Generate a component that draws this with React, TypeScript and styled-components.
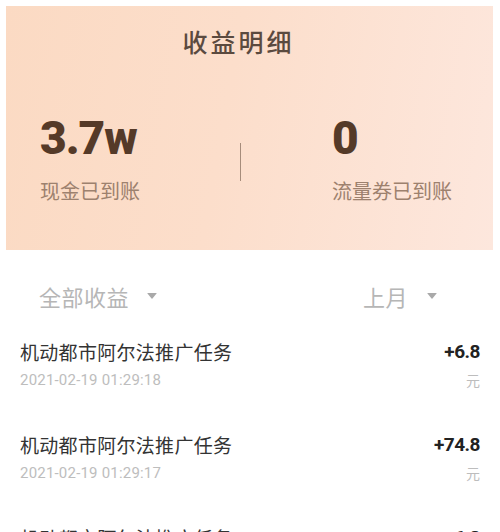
import styled, { createGlobalStyle } from 'styled-components'

const GlobalStyle = createGlobalStyle`
  body {
    margin: 0;
    background: #ffffff;
    font-family: 'Noto Sans CJK SC', 'Noto Sans', sans-serif;
  }
`

const Page = styled.div`
  width: 500px;
  height: 532px;
  overflow: hidden;
  background: #ffffff;
`

const SummaryCard = styled.section`
  margin: 6px 7px 0 6px;
  height: 244px;
  box-sizing: border-box;
  padding-top: 21px;
  background: linear-gradient(100deg, #fbdac3 0%, #fcdecb 45%, #fde7dd 100%);
`

const CardTitle = styled.h1`
  margin: 0;
  padding-right: 22px;
  text-align: center;
  font-size: 25px;
  line-height: 28px;
  font-weight: 500;
  letter-spacing: 3px;
  color: #5b4a3f;
`

const StatsRow = styled.div`
  margin-top: 60px;
  display: flex;
  align-items: flex-start;
`

const Stat = styled.div<{ $width: number; $pad: number }>`
  width: ${props => props.$width}px;
  padding-left: ${props => props.$pad}px;
  box-sizing: border-box;
  display: flex;
  flex-direction: column;
  gap: 20px;
`

const StatValue = styled.div`
  font-family: Roboto, 'Liberation Sans', sans-serif;
  font-weight: 900;
  font-size: 46px;
  line-height: 46px;
  letter-spacing: -1px;
  color: #553a28;
`

const StatLabel = styled.div`
  font-size: 20px;
  line-height: 20px;
  color: #9d816e;
`

const Divider = styled.div`
  margin-top: 28px;
  width: 1px;
  height: 38px;
  background: #a68c7b;
`

const FilterRow = styled.div`
  display: flex;
  justify-content: space-between;
  padding: 34px 63px 0 39px;
  height: 80px;
  box-sizing: border-box;
`

const Filter = styled.div<{ $gap: number }>`
  display: flex;
  align-items: center;
  gap: ${props => props.$gap}px;
  height: 24px;
  font-size: 22px;
  line-height: 24px;
  letter-spacing: 0.5px;
  color: #b6b6b6;
`

const Caret = styled.span`
  width: 0;
  height: 0;
  border-left: 5px solid transparent;
  border-right: 5px solid transparent;
  border-top: 6px solid #a9a9a9;
  border-radius: 1px;
`

const List = styled.ul`
  margin: 0;
  padding: 0;
  list-style: none;
`

const Item = styled.li`
  height: 93px;
  padding: 10px 20px 0 20px;
  box-sizing: border-box;
  display: flex;
  justify-content: space-between;
`

const ItemMain = styled.div`
  display: flex;
  flex-direction: column;
  gap: 6px;
`

const ItemTitle = styled.div`
  font-size: 19px;
  line-height: 24px;
  letter-spacing: 0.3px;
  color: #333333;
`

const ItemTime = styled.div`
  font-family: Roboto, 'Liberation Sans', sans-serif;
  font-size: 15px;
  line-height: 20px;
  letter-spacing: 0.2px;
  color: #bdbdbd;
`

const ItemAmount = styled.div`
  display: flex;
  flex-direction: column;
  align-items: flex-end;
  gap: 6px;
`

const Amount = styled.div`
  font-family: Roboto, 'Liberation Sans', sans-serif;
  font-weight: 700;
  font-size: 19px;
  line-height: 24px;
  letter-spacing: -0.5px;
  color: #222222;
`

const Unit = styled.div`
  font-size: 14px;
  line-height: 20px;
  color: #bdbdbd;
`

interface IRecord {
  id: number
  title: string
  time: string
  amount: string
}

const records: Array<IRecord> = [
  { id: 1, title: '机动都市阿尔法推广任务', time: '2021-02-19 01:29:18', amount: '+6.8' },
  { id: 2, title: '机动都市阿尔法推广任务', time: '2021-02-19 01:29:17', amount: '+74.8' },
  { id: 3, title: '机动都市阿尔法推广任务', time: '2021-02-19 01:29:15', amount: '+6.8' },
]

function App() {
  return (
    <Page>
      <GlobalStyle />
      <SummaryCard>
        <CardTitle>收益明细</CardTitle>
        <StatsRow>
          <Stat $width={234} $pad={34}>
            <StatValue>3.7w</StatValue>
            <StatLabel>现金已到账</StatLabel>
          </Stat>
          <Divider />
          <Stat $width={250} $pad={91}>
            <StatValue>0</StatValue>
            <StatLabel>流量券已到账</StatLabel>
          </Stat>
        </StatsRow>
      </SummaryCard>
      <FilterRow>
        <Filter $gap={18}>
          全部收益
          <Caret />
        </Filter>
        <Filter $gap={19}>
          上月
          <Caret />
        </Filter>
      </FilterRow>
      <List>
        {records.map((record) => (
          <Item key={record.id}>
            <ItemMain>
              <ItemTitle>{record.title}</ItemTitle>
              <ItemTime>{record.time}</ItemTime>
            </ItemMain>
            <ItemAmount>
              <Amount>{record.amount}</Amount>
              <Unit>元</Unit>
            </ItemAmount>
          </Item>
        ))}
      </List>
    </Page>
  )
}

export default App
